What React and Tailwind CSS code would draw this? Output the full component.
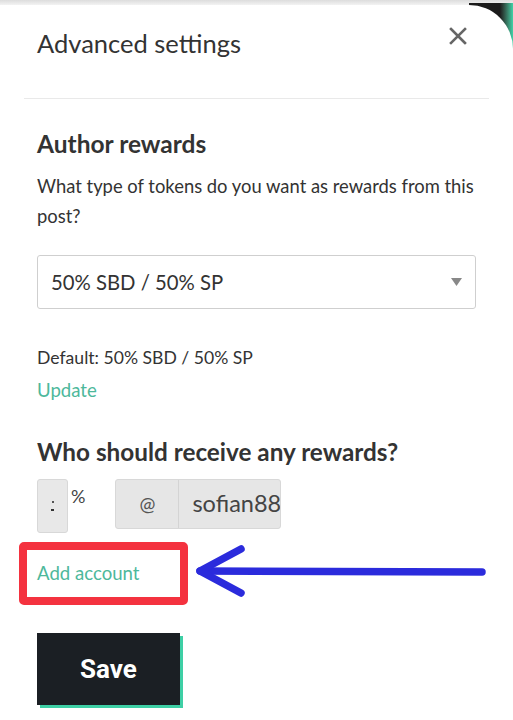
import React from 'react'

const teal = 'text-[#4db89b]'

function CloseIcon() {
  return (
    <svg width="18" height="18" viewBox="0 0 18 18" className="text-[#666]">
      <path d="M2 2 L16 16 M16 2 L2 16" stroke="currentColor" strokeWidth="2.6" strokeLinecap="square" />
    </svg>
  )
}

function Arrow() {
  return (
    <svg width="300" height="64" viewBox="0 0 300 64" className="ml-[6px]">
      <g stroke="#2b2bdc" strokeWidth="7.5" strokeLinecap="round" strokeLinejoin="round" fill="none">
        <path d="M6 30 L288 31" />
        <path d="M47 8 L6 30 L47 52" />
      </g>
    </svg>
  )
}

export default function App() {
  return (
    <div
      className="relative h-[720px] w-[513px] overflow-hidden bg-white text-[#333]"
      style={{ fontFamily: 'Lato, "Noto Sans", sans-serif' }}
    >
      <div className="h-[5px] bg-gradient-to-b from-[#dcdcdc] to-[#f3f3f3]" />
      {/* dark corner behind the rounded sheet */}
      <div className="absolute right-0 top-[3px] h-[50px] w-[44px] bg-gradient-to-r from-[#1b1b1b] from-70% to-[#3fd3a8]" />

      <div className="relative z-10 flex flex-col rounded-tr-[44px] bg-white">
        <div className="flex h-[93px] items-start justify-between pl-[37px] pr-[46px] pt-[22px]">
          <h1 className="text-[25.5px] leading-[32px] text-[#333]">Advanced settings</h1>
          <div>
            <CloseIcon />
          </div>
        </div>
        <div className="mx-[24px] border-t border-[#e9e9e9]" />

        <div className="px-[37px] pt-[30px]">
          <h2 className="text-[24.5px] font-bold leading-[30px] text-[#333]">Author rewards</h2>
          <p className="mt-[12px] text-[18.4px] leading-[30px] text-[#333]">
            What type of tokens do you want as rewards from this post?
          </p>

          <div className="mt-[24px] flex h-[54px] w-[439px] items-center justify-between rounded-[3px] border border-[#cfcfcf] pl-[13px] pr-[13px]">
            <span className="text-[20.3px] text-[#333]">50% SBD / 50% SP</span>
            <svg width="11" height="8" viewBox="0 0 11 8">
              <path d="M0 0 H11 L5.5 8 Z" fill="#888" />
            </svg>
          </div>

          <p className="mt-[36px] text-[17.6px] leading-[26px] text-[#333]">Default: 50% SBD / 50% SP</p>
          <a className={`mt-[6px] block text-[18.6px] leading-[26px] ${teal}`}>Update</a>

          <h2 className="mt-[34px] text-[24.3px] font-bold leading-[30px] text-[#333]">
            Who should receive any rewards?
          </h2>

          <div className="mt-[12px] flex items-start">
            <div className="flex h-[54px] w-[31px] flex-col items-center justify-center gap-[6px] rounded-[3px] border border-[#d8d8d8] bg-[#e8e8e8]">
              <span className="h-[2px] w-[2px] bg-[#555]" />
              <span className="h-[2px] w-[3px] bg-[#333]" />
            </div>
            <span className="ml-[3px] mt-[4px] text-[18px] leading-[26px] text-[#444]">%</span>
            <div className="ml-[30px] flex h-[50px] rounded-[3px] border border-[#d8d8d8] bg-[#e6e6e6]">
              <div className="flex w-[63px] items-center justify-center border-r border-[#d4d4d4] text-[19px] text-[#555]">
                @
              </div>
              <div className="flex w-[101px] items-center overflow-hidden pl-[13px] text-[23.5px] text-[#444]">
                <span className="whitespace-nowrap">sofian88</span>
              </div>
            </div>
          </div>
        </div>

        <div className="mt-[8px] flex items-center pl-[19px]">
          <div className="flex h-[63px] w-[169px] items-center rounded-[5px] border-[8px] border-[#f4323f] pl-[10px]">
            <span className={`text-[18.6px] leading-[26px] ${teal}`}>Add account</span>
          </div>
          <Arrow />
        </div>

        <div className="px-[37px] pt-[28px]">
          <button
            type="button"
            className="flex h-[72px] w-[143px] items-center justify-center bg-[#1b1f24] text-[26px] font-bold text-white shadow-[3px_3px_0_#3ecfa5]"
            style={{ fontFamily: 'Roboto, "Liberation Sans", sans-serif' }}
          >
            Save
          </button>
        </div>
      </div>
    </div>
  )
}
